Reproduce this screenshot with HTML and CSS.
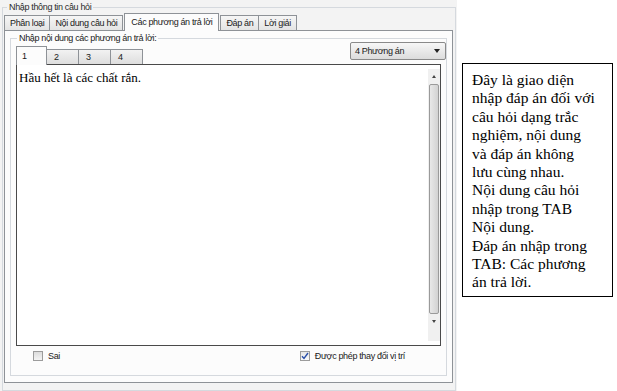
FILE: index.html
```html
<!DOCTYPE html>
<html lang="vi">
<head>
    <meta charset="UTF-8">
    <title>Nhập thông tin câu hỏi</title>
    <link rel="stylesheet" href="styles.css">
</head>
<body>
    <div class="page">
        <fieldset class="window">
            <legend>Nhập thông tin câu hỏi</legend>

            <div class="tabs">
                <div class="tab">Phân loại</div>
                <div class="tab">Nội dung câu hỏi</div>
                <div class="tab active">Các phương án trả lời</div>
                <div class="tab">Đáp án</div>
                <div class="tab">Lời giải</div>
            </div>

            <div class="tab-pane">
                <fieldset class="group">
                    <legend>Nhập nội dung các phương án trả lời:</legend>

                    <div class="group-head">
                        <div class="subtabs">
                            <div class="subtab active">1</div>
                            <div class="subtab">2</div>
                            <div class="subtab">3</div>
                            <div class="subtab">4</div>
                        </div>
                        <div class="combo">
                            <span>4 Phương án</span>
                            <span class="combo-arrow"></span>
                        </div>
                    </div>

                    <div class="editor">
                        <div class="editor-text">Hầu hết là các chất rắn.</div>
                        <div class="scrollbar">
                            <div class="sb-btn"><span class="arrow-up"></span></div>
                            <div class="sb-thumb"></div>
                            <div class="sb-btn"><span class="arrow-down"></span></div>
                        </div>
                    </div>

                    <div class="options">
                        <label class="check"><span class="box"></span>Sai</label>
                        <label class="check"><span class="box checked">
                            <svg width="8" height="8" viewBox="0 0 8 8"><path d="M1 4.2 L3 6.5 L7 1" fill="none" stroke="#2a4fa8" stroke-width="1.4"/></svg>
                        </span>Được phép thay đổi vị trí</label>
                    </div>
                </fieldset>
            </div>
        </fieldset>

        <div class="note">
            Đây là giao diện<br>
            nhập đáp án đối với<br>
            câu hỏi dạng trắc<br>
            nghiệm, nội dung<br>
            và đáp án không<br>
            lưu cùng nhau.<br>
            Nội dung câu hỏi<br>
            nhập trong TAB<br>
            Nội dung.<br>
            Đáp án nhập trong<br>
            TAB: Các phương<br>
            án trả lời.
        </div>
    </div>
</body>
</html>
```

FILE: styles.css
```css
* {
    margin: 0;
    padding: 0;
    box-sizing: border-box;
}

body {
    background: #ffffff;
    font-family: "Liberation Sans", Arial, sans-serif;
    font-size: 9px;
    letter-spacing: -0.35px;
    color: #1a1a1a;
}

.page {
    display: flex;
    align-items: flex-start;
    width: 617px;
    height: 391px;
    background: linear-gradient(to right, #f3f3f3 0, #f3f3f3 457px, #ffffff 457px);
}

/* khung ngoài */
.window {
    width: 454px;
    height: 389px;
    margin: 2px 0 0 2px;
    border: 1px solid #d5d9de;
    padding: 0 2px 3px 1px;
}

.window > legend {
    margin-left: 3px;
    padding: 0 2px;
    color: #2b2b2b;
}

/* thanh tab */
.tabs {
    display: flex;
    align-items: flex-end;
    height: 17px;
    margin-top: 1px;
}

.tab {
    height: 15px;
    padding: 2px 5px 0;
    border: 1px solid #8e9297;
    border-bottom: none;
    margin-right: -1px;
    background: linear-gradient(#f6f6f6, #e4e4e4);
    white-space: nowrap;
}

.tab.active {
    position: relative;
    z-index: 2;
    height: 18px;
    margin: 0 1px 0 2px;
    padding: 3px 6px 0;
    background: #fcfcfc;
    margin-bottom: -1px;
}

.tab-pane {
    height: 353px;
    border: 1px solid #8e9297;
    background: #fcfcfc;
    padding: 2px 5px 6px 5px;
}

/* nhóm nhập phương án */
.group {
    height: 100%;
    border: 1px solid #d5d9de;
    padding: 0 5px 0 5px;
}

.group > legend {
    margin-left: 1px;
    padding: 0 2px;
}

.group-head {
    display: flex;
    justify-content: space-between;
    align-items: flex-start;
    height: 21px;
}

.subtabs {
    display: flex;
    align-items: flex-end;
    height: 21px;
}

.subtab {
    width: 33px;
    height: 15px;
    padding: 2px 0 0 7px;
    border: 1px solid #8e9297;
    border-bottom: none;
    margin-right: -1px;
    background: linear-gradient(#f2f2f2, #dedede);
}

.subtab.active {
    position: relative;
    z-index: 2;
    width: 31px;
    height: 19px;
    padding: 4px 0 0 5px;
    margin-bottom: -1px;
    background: #fcfcfc;
}

.combo {
    display: flex;
    justify-content: space-between;
    align-items: center;
    width: 96px;
    height: 18px;
    margin: -1px -5px 0 0;
    padding: 0 5px 0 4px;
    border: 1px solid #8a8a8a;
    border-radius: 2px;
    background: linear-gradient(#f7f7f7, #dcdcdc);
}

.combo-arrow {
    width: 0;
    height: 0;
    border-left: 3px solid transparent;
    border-right: 3px solid transparent;
    border-top: 4px solid #222;
}

/* ô soạn thảo */
.editor {
    display: flex;
    height: 282px;
    border: 1px solid #4a4a4a;
    background: #ffffff;
}

.editor-text {
    flex: 1;
    padding: 5px 0 0 2px;
    font-family: "Liberation Serif", "Times New Roman", serif;
    font-size: 13px;
    letter-spacing: 0;
    color: #000;
}

.scrollbar {
    display: flex;
    flex-direction: column;
    width: 12px;
    margin: 4px 0 4px 0;
    background: #f0f0f0;
}

.sb-btn {
    height: 14px;
    display: flex;
    align-items: center;
    justify-content: center;
}

.arrow-up {
    border-left: 2px solid transparent;
    border-right: 2px solid transparent;
    border-bottom: 3px solid #444;
}

.arrow-down {
    border-left: 2px solid transparent;
    border-right: 2px solid transparent;
    border-top: 3px solid #444;
}

.sb-thumb {
    height: 230px;
    margin: 1px 1px 0;
    border: 1px solid #9a9a9a;
    border-radius: 2px;
    background: linear-gradient(to right, #e8e8e8, #d2d2d2);
}

/* hộp kiểm */
.options {
    display: flex;
    justify-content: space-between;
    padding: 5px 36px 0 17px;
}

.check {
    display: flex;
    align-items: center;
    gap: 5px;
}

.box {
    display: flex;
    align-items: center;
    justify-content: center;
    width: 10px;
    height: 10px;
    border: 1px solid #9c9c9c;
    background: linear-gradient(#dcdcdc, #f4f4f4);
}

.box.checked {
    background: linear-gradient(#e6e6e6, #fafafa);
}

/* ghi chú bên phải */
.note {
    width: 151px;
    margin: 63px 0 0 6px;
    padding: 7px 0 4px 9px;
    border: 1px solid #000;
    background: #fff;
    font-family: "Liberation Serif", "Times New Roman", serif;
    font-size: 15.5px;
    line-height: 18.4px;
    letter-spacing: 0;
    color: #000;
}
```
